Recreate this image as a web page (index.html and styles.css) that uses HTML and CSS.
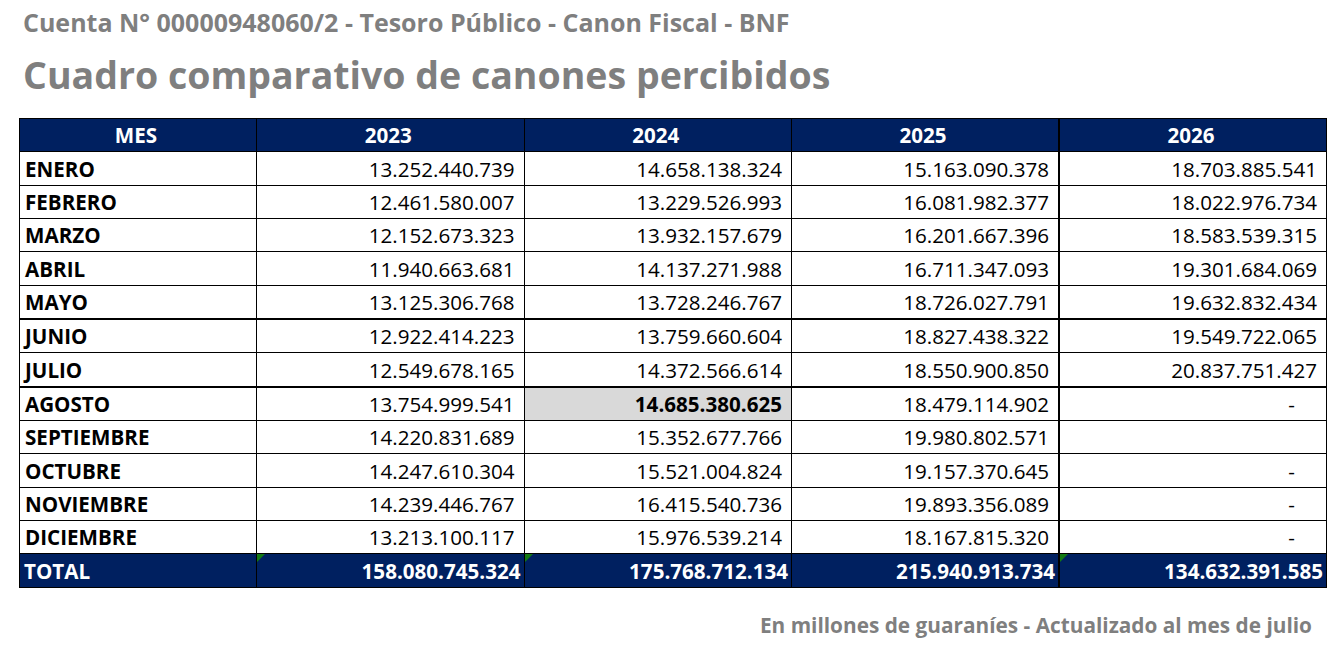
FILE: index.html
```html
<!DOCTYPE html>
<html lang="es">
<head>
<meta charset="utf-8">
<title>Cuadro comparativo de canones percibidos</title>
<link rel="stylesheet" href="styles.css">
</head>
<body>
<div class="page">
  <h2 class="subtitle">Cuenta N° 00000948060/2 - Tesoro Público - Canon Fiscal - BNF</h2>
  <h1 class="title">Cuadro comparativo de canones percibidos</h1>
  <table class="grid">
    <colgroup>
      <col class="c-mes"><col class="c-y"><col class="c-y"><col class="c-y"><col class="c-y">
    </colgroup>
    <thead>
      <tr><th>MES</th><th>2023</th><th>2024</th><th>2025</th><th class="sep">2026</th></tr>
    </thead>
    <tbody>
      <tr><td class="m">ENERO</td><td>13.252.440.739</td><td>14.658.138.324</td><td>15.163.090.378</td><td class="sep">18.703.885.541</td></tr>
      <tr><td class="m">FEBRERO</td><td>12.461.580.007</td><td>13.229.526.993</td><td>16.081.982.377</td><td class="sep">18.022.976.734</td></tr>
      <tr><td class="m">MARZO</td><td>12.152.673.323</td><td>13.932.157.679</td><td>16.201.667.396</td><td class="sep">18.583.539.315</td></tr>
      <tr><td class="m">ABRIL</td><td>11.940.663.681</td><td>14.137.271.988</td><td>16.711.347.093</td><td class="sep">19.301.684.069</td></tr>
      <tr class="thick"><td class="m">MAYO</td><td>13.125.306.768</td><td>13.728.246.767</td><td>18.726.027.791</td><td class="sep">19.632.832.434</td></tr>
      <tr><td class="m">JUNIO</td><td>12.922.414.223</td><td>13.759.660.604</td><td>18.827.438.322</td><td class="sep">19.549.722.065</td></tr>
      <tr class="thick"><td class="m">JULIO</td><td>12.549.678.165</td><td>14.372.566.614</td><td>18.550.900.850</td><td class="sep">20.837.751.427</td></tr>
      <tr><td class="m">AGOSTO</td><td>13.754.999.541</td><td class="hl">14.685.380.625</td><td>18.479.114.902</td><td class="sep dash">-</td></tr>
      <tr><td class="m">SEPTIEMBRE</td><td>14.220.831.689</td><td>15.352.677.766</td><td>19.980.802.571</td><td class="sep dash"></td></tr>
      <tr><td class="m">OCTUBRE</td><td>14.247.610.304</td><td>15.521.004.824</td><td>19.157.370.645</td><td class="sep dash">-</td></tr>
      <tr><td class="m">NOVIEMBRE</td><td>14.239.446.767</td><td>16.415.540.736</td><td>19.893.356.089</td><td class="sep dash">-</td></tr>
      <tr><td class="m">DICIEMBRE</td><td>13.213.100.117</td><td>15.976.539.214</td><td>18.167.815.320</td><td class="sep dash">-</td></tr>
    </tbody>
    <tfoot>
      <tr><td class="m">TOTAL</td><td class="flag">158.080.745.324</td><td class="flag">175.768.712.134</td><td>215.940.913.734</td><td class="sep flag">134.632.391.585</td></tr>
    </tfoot>
  </table>
  <p class="note">En millones de guaraníes - Actualizado al mes de julio</p>
</div>
</body>
</html>
```
FILE: styles.css
```css
html, body {
  margin: 0;
  padding: 0;
  background: #ffffff;
}
body {
  font-family: "Open Sans", "Liberation Sans", sans-serif;
  color: #000;
}
.page {
  width: 1307px;
  padding: 6px 0 0 19px;
}
.subtitle {
  margin: 0 0 0 4px;
  font-size: 25px;
  line-height: 32px;
  font-weight: 700;
  color: #7f7f7f;
}
.title {
  margin: 12px 0 0 4px;
  font-size: 37.5px;
  line-height: 50px;
  font-weight: 700;
  color: #7f7f7f;
}
.grid {
  margin-top: 18px;
  width: 1307px;
  border-collapse: collapse;
  table-layout: fixed;
  font-size: 20.6px;
}
.c-mes { width: 237px; }
.c-y { width: 267.5px; }
.grid th, .grid td {
  border: 1px solid #000;
  height: 32.35px;
  padding: 0 9px 0 5px;
  white-space: nowrap;
  line-height: 26px;
}
.grid th {
  background: #002060;
  color: #fff;
  font-weight: 700;
  text-align: center;
}
.grid td {
  text-align: right;
}
.grid td.m {
  text-align: left;
  font-weight: 700;
}
.grid .sep {
  border-left: 2px solid #000;
}
.grid tr.thick td {
  border-bottom: 2px solid #000;
}
.grid td.hl {
  background: #d9d9d9;
  font-weight: 700;
}
.grid td.dash {
  padding-right: 31px;
}
.grid tfoot td {
  background: #002060;
  color: #fff;
  font-weight: 700;
  padding-right: 3px;
}
.grid tfoot td.m {
  padding-left: 4px;
}
.grid td.flag {
  position: relative;
}
.grid td.flag::before {
  content: "";
  position: absolute;
  left: 0;
  top: 0;
  border-top: 8px solid #137a13;
  border-right: 8px solid transparent;
}
.note {
  margin: 23px 14px 0 0;
  text-align: right;
  font-size: 20.8px;
  font-weight: 700;
  color: #7f7f7f;
}
```
